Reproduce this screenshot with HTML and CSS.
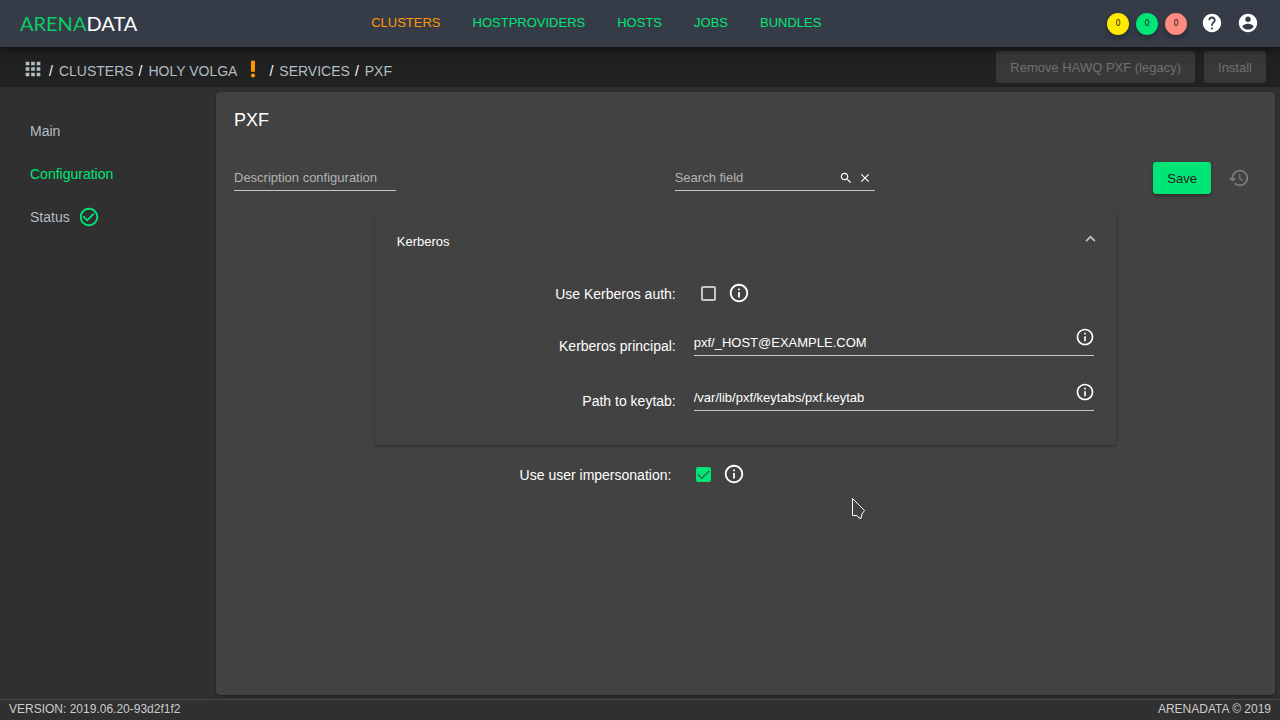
FILE: index.html
```html
<!DOCTYPE html>
<html lang="en">
<head>
  <meta charset="UTF-8">
  <meta name="viewport" content="width=device-width, initial-scale=1.0">
  <title>Arenadata - PXF</title>
  <link rel="stylesheet" href="styles.css">
</head>
<body>
  <svg class="sprite" aria-hidden="true">
    <symbol id="info" viewBox="0 0 24 24">
      <path d="M11 17h2v-6h-2v6zm1-15C6.48 2 2 6.48 2 12s4.48 10 10 10 10-4.48 10-10S17.52 2 12 2zm0 18c-4.41 0-8-3.59-8-8s3.59-8 8-8 8 3.59 8 8-3.59 8-8 8zM11 9h2V7h-2v2z"/>
    </symbol>
  </svg>

  <header class="header">
    <a class="logo" href="#"><span>ARENA</span>DATA</a>
    <nav class="nav">
      <a class="active" href="#">CLUSTERS</a>
      <a href="#">HOSTPROVIDERS</a>
      <a href="#">HOSTS</a>
      <a href="#">JOBS</a>
      <a href="#">BUNDLES</a>
    </nav>
    <div class="header-tools">
      <button class="counter yellow" type="button">0</button>
      <button class="counter green" type="button">0</button>
      <button class="counter red" type="button">0</button>
      <button class="icon-button help" type="button" aria-label="Help">
        <svg class="icon" viewBox="0 0 24 24"><path d="M12 2C6.48 2 2 6.48 2 12s4.48 10 10 10 10-4.48 10-10S17.52 2 12 2zm1 17h-2v-2h2v2zm2.07-7.75l-.9.92C13.45 12.9 13 13.5 13 15h-2v-.5c0-1.1.45-2.1 1.17-2.83l1.24-1.26c.37-.36.59-.86.59-1.41 0-1.1-.9-2-2-2s-2 .9-2 2H8c0-2.21 1.79-4 4-4s4 1.79 4 4c0 .88-.36 1.68-.93 2.25z"/></svg>
      </button>
      <button class="icon-button" type="button" aria-label="Account">
        <svg class="icon" viewBox="0 0 24 24"><path d="M12 2C6.48 2 2 6.48 2 12s4.48 10 10 10 10-4.48 10-10S17.52 2 12 2zm0 3c1.66 0 3 1.34 3 3s-1.34 3-3 3-3-1.34-3-3 1.34-3 3-3zm0 14.2c-2.5 0-4.71-1.28-6-3.22.03-1.99 4-3.08 6-3.08 1.99 0 5.97 1.09 6 3.08-1.29 1.94-3.5 3.22-6 3.22z"/></svg>
      </button>
    </div>
  </header>

  <div class="toolbar">
    <nav class="crumbs" aria-label="Breadcrumbs">
      <a href="#" aria-label="Home">
        <svg class="icon" viewBox="0 0 24 24"><path d="M4 8h4V4H4v4zm6 12h4v-4h-4v4zm-6 0h4v-4H4v4zm0-6h4v-4H4v4zm6 0h4v-4h-4v4zm6-10v4h4V4h-4zm-6 4h4V4h-4v4zm6 6h4v-4h-4v4zm0 6h4v-4h-4v4z"/></svg>
      </a>
      <span>/</span>
      <a href="#">CLUSTERS</a>
      <span>/</span>
      <a href="#">HOLY VOLGA</a>
      <svg class="icon issue" viewBox="0 0 24 24"><circle cx="12" cy="19" r="2.2"/><path d="M9.8 3h4.4v12H9.8z"/></svg>
      <span>/</span>
      <a href="#">SERVICES</a>
      <span>/</span>
      <a href="#">PXF</a>
    </nav>
    <div class="actions">
      <button class="button" type="button" disabled>Remove HAWQ PXF (legacy)</button>
      <button class="button" type="button" disabled>Install</button>
    </div>
  </div>

  <div class="content">
    <nav class="sidebar">
      <a href="#">Main</a>
      <a class="active" href="#">Configuration</a>
      <a href="#">Status
        <svg class="icon" viewBox="0 0 24 24"><path d="M16.59 7.58L10 14.17l-3.59-3.58L5 12l5 5 8-8zM12 2C6.48 2 2 6.48 2 12s4.48 10 10 10 10-4.48 10-10S17.52 2 12 2zm0 18c-4.42 0-8-3.58-8-8s3.58-8 8-8 8 3.58 8 8-3.58 8-8 8z"/></svg>
      </a>
    </nav>

    <main class="card">
      <h1>PXF</h1>

      <div class="tools">
        <div class="field description">
          <input type="text" placeholder="Description configuration" aria-label="Description configuration">
        </div>
        <div class="field search">
          <input type="text" placeholder="Search field" aria-label="Search field">
          <button class="icon-button" type="button" aria-label="Search">
            <svg class="icon" viewBox="0 0 24 24"><path d="M15.5 14h-.79l-.28-.27C15.41 12.59 16 11.11 16 9.5 16 5.91 13.09 3 9.5 3S3 5.91 3 9.5 5.91 16 9.5 16c1.61 0 3.09-.59 4.23-1.57l.27.28v.79l5 4.99L20.49 19l-4.99-5zm-6 0C7.01 14 5 11.99 5 9.5S7.01 5 9.5 5 14 7.01 14 9.5 11.99 14 9.5 14z"/></svg>
          </button>
          <button class="icon-button" type="button" aria-label="Clear">
            <svg class="icon" viewBox="0 0 24 24"><path d="M19 6.41L17.59 5 12 10.59 6.41 5 5 6.41 10.59 12 5 17.59 6.41 19 12 13.41 17.59 19 19 17.59 13.41 12z"/></svg>
          </button>
        </div>
        <div class="save-block">
          <button class="button save" type="button">Save</button>
          <button class="icon-button history" type="button" aria-label="History" disabled>
            <svg class="icon" viewBox="0 0 24 24"><path d="M13 3c-4.97 0-9 4.03-9 9H1l3.89 3.89.07.14L9 12H6c0-3.87 3.13-7 7-7s7 3.13 7 7-3.13 7-7 7c-1.93 0-3.68-.79-4.94-2.06l-1.42 1.42C8.27 19.99 10.51 21 13 21c4.97 0 9-4.03 9-9s-4.03-9-9-9zm-1 5v5l4.28 2.54.72-1.21-3.5-2.08V8H12z"/></svg>
          </button>
        </div>
      </div>

      <form class="config">
        <section class="panel">
          <button class="panel-header" type="button" aria-expanded="true">
            Kerberos
            <svg class="chevron" viewBox="0 0 12 8"><path d="M1 7l5-5 5 5"/></svg>
          </button>
          <div class="row">
            <label for="auth">Use Kerberos auth:</label>
            <div class="check">
              <input type="checkbox" id="auth">
              <svg class="icon"><use href="#info"/></svg>
            </div>
          </div>
          <div class="row">
            <label for="principal">Kerberos principal:</label>
            <div class="field">
              <input type="text" id="principal" value="pxf/_HOST@EXAMPLE.COM">
              <svg class="icon"><use href="#info"/></svg>
            </div>
          </div>
          <div class="row">
            <label for="keytab">Path to keytab:</label>
            <div class="field">
              <input type="text" id="keytab" value="/var/lib/pxf/keytabs/pxf.keytab">
              <svg class="icon"><use href="#info"/></svg>
            </div>
          </div>
        </section>
        <div class="row">
          <label for="impersonation">Use user impersonation:</label>
          <div class="check">
            <input type="checkbox" id="impersonation" checked>
            <svg class="icon"><use href="#info"/></svg>
          </div>
        </div>
      </form>
    </main>
  </div>

  <footer class="footer">
    <span>VERSION: 2019.06.20-93d2f1f2</span>
    <span>ARENADATA © 2019</span>
  </footer>

  <svg class="pointer" viewBox="0 0 14 22" aria-hidden="true"><path d="M.5.5v17h4.500l2 2.500 2 .5 1-4.500 2.500-3.500z"/></svg>
</body>
</html>
```
FILE: styles.css
```css
* {
  box-sizing: border-box;
}
body {
  display: flex;
  flex-direction: column;
  min-height: 100vh;
  margin: 0;
  background: #303030;
  color: #fff;
  font-family: "Liberation Sans", Arial, sans-serif;
  font-size: 14px;
}
a {
  text-decoration: none;
}
button,
input {
  margin: 0;
  border: none;
  font-family: inherit;
  font-size: 13px;
}
.sprite {
  display: none;
}
.icon {
  flex: none;
  width: 22px;
  height: 22px;
  fill: currentColor;
}
.icon-button {
  display: flex;
  align-items: center;
  justify-content: center;
  padding: 0;
  background: none;
  color: #fff;
}

/* header */
.header {
  display: grid;
  grid-template-columns: 29% 1fr auto;
  align-items: center;
  height: 47px;
  background: #353c48;
  box-shadow: 0 2px 10px rgba(0, 0, 0, 0.6);
  z-index: 1;
}
.logo {
  padding: 0 0 2px 20px;
  color: #fff;
  font-family: Lato, sans-serif;
  font-size: 20px;
}
.logo span {
  color: #0acb64;
}
.nav {
  display: flex;
  gap: 32px;
  padding-bottom: 2px;
  font-size: 13px;
}
.nav a {
  color: #00e676;
}
.nav .active {
  color: #ff9800;
}
.header-tools {
  display: flex;
  align-items: center;
  gap: 7px;
  padding-right: 21px;
}
.header-tools .icon-button {
  padding-bottom: 2px;
}
.counter {
  width: 22px;
  height: 22px;
  padding: 0;
  border-radius: 50%;
  box-shadow: 0 3px 5px rgba(0, 0, 0, 0.3);
  color: #212121;
  font-family: "DejaVu Sans", sans-serif;
  font-size: 8px;
}
.yellow {
  background: #ffea00;
}
.green {
  background: #00e676;
}
.red {
  background: #ff8a80;
}
.help {
  margin: 0 7px;
}

/* breadcrumbs */
.toolbar {
  display: flex;
  align-items: center;
  justify-content: space-between;
  height: 40px;
  padding: 0 14px 0 22px;
  background: #212121;
}
.crumbs {
  display: flex;
  align-items: center;
  gap: 5px;
  padding-top: 8px;
}
.crumbs a {
  display: flex;
  color: #b0bec5;
}
.crumbs span {
  margin-right: 1px;
}
.crumbs .icon {
  margin-bottom: 4px;
}
.issue {
  color: #ff9800;
}
.actions {
  display: flex;
  gap: 9px;
}
.button {
  height: 32px;
  padding: 0 14px;
  border-radius: 3px;
  background: #00e676;
  color: #212121;
}
.button:disabled {
  background: #383838;
  color: #707070;
}

/* page */
.content {
  display: flex;
  flex: 1;
}
.sidebar {
  display: flex;
  flex-direction: column;
  width: 216px;
  padding: 22px 30px;
}
.sidebar a {
  display: flex;
  align-items: center;
  gap: 8px;
  height: 43px;
  color: #b0bec5;
}
.sidebar .active,
.sidebar .icon {
  color: #00e676;
}
.card {
  flex: 1;
  margin: 5px 5px 4px 0;
  border-radius: 4px;
  background: #424242;
  box-shadow: 0 1px 3px rgba(0, 0, 0, 0.4);
}
h1 {
  margin: 0;
  padding: 17px 18px 0;
  font-size: 18px;
  font-weight: 400;
  line-height: 22px;
}
.tools {
  display: flex;
  align-items: center;
  justify-content: space-between;
  margin-top: 31px;
  padding: 0 18px;
}
.field {
  display: flex;
  height: 26px;
  border-bottom: 1px solid #c6c6c6;
}
.field input {
  flex: 1;
  min-width: 0;
  padding: 0;
  outline: none;
  background: none;
  color: #fff;
}
.field input::placeholder {
  color: #b3b3b3;
}
.description {
  width: 162px;
}
.search {
  width: 200px;
}
.search .icon-button {
  width: 19px;
}
.search .icon {
  width: 14px;
  height: 14px;
}
.save-block {
  display: flex;
  gap: 10px;
}
.save {
  box-shadow: 0 2px 3px rgba(0, 0, 0, 0.35);
}
.history {
  width: 36px;
  color: #7b7b7b;
}

/* config form */
.config {
  width: 70%;
  margin: 18px auto 0;
}
.panel {
  margin-bottom: 5px;
  padding: 0 22px 17px;
  border-radius: 3px;
  box-shadow: 0 1px 3px rgba(0, 0, 0, 0.4);
}
.panel-header {
  display: flex;
  align-items: center;
  justify-content: space-between;
  width: 100%;
  height: 57px;
  padding: 2px 0 0;
  background: none;
  color: #fff;
}
.chevron {
  width: 11px;
  height: 7px;
  margin: 0 -2px 6px 0;
  fill: none;
  stroke: #c6c6c6;
  stroke-width: 2;
}
.row {
  display: flex;
  align-items: center;
  gap: 18px;
  min-height: 49px;
}
.row label {
  flex: none;
  width: 40%;
  text-align: right;
}
.row .field {
  flex: 1;
  height: 30px;
  margin: 8px 0 17px;
}
.row .field input {
  padding-top: 4px;
}
.row .field .icon {
  width: 20px;
  height: 22px;
  margin-right: -1px;
}
.check {
  display: flex;
  align-items: center;
  gap: 12px;
  padding-left: 7px;
}
.check .icon {
  margin-bottom: 2px;
}
.check input {
  display: grid;
  place-content: center;
  appearance: none;
  width: 15px;
  height: 15px;
  border: 2px solid #c6c6c6;
  border-radius: 2px;
}
.check input:checked {
  border-color: #00e676;
  background: #00e676;
}
.check input:checked::before {
  content: "";
  width: 10px;
  height: 5px;
  margin-bottom: 3px;
  border: solid #424242;
  border-width: 0 0 1px 1px;
  transform: rotate(-45deg);
}

.footer {
  display: flex;
  justify-content: space-between;
  height: 21px;
  padding: 0 9px;
  border-top: 1px solid #484848;
  color: #ccc;
  font-size: 12px;
  line-height: 19px;
}
.pointer {
  position: absolute;
  left: 852px;
  top: 498px;
  width: 14px;
  height: 22px;
  fill: #424242;
  stroke: #fff;
}
```
